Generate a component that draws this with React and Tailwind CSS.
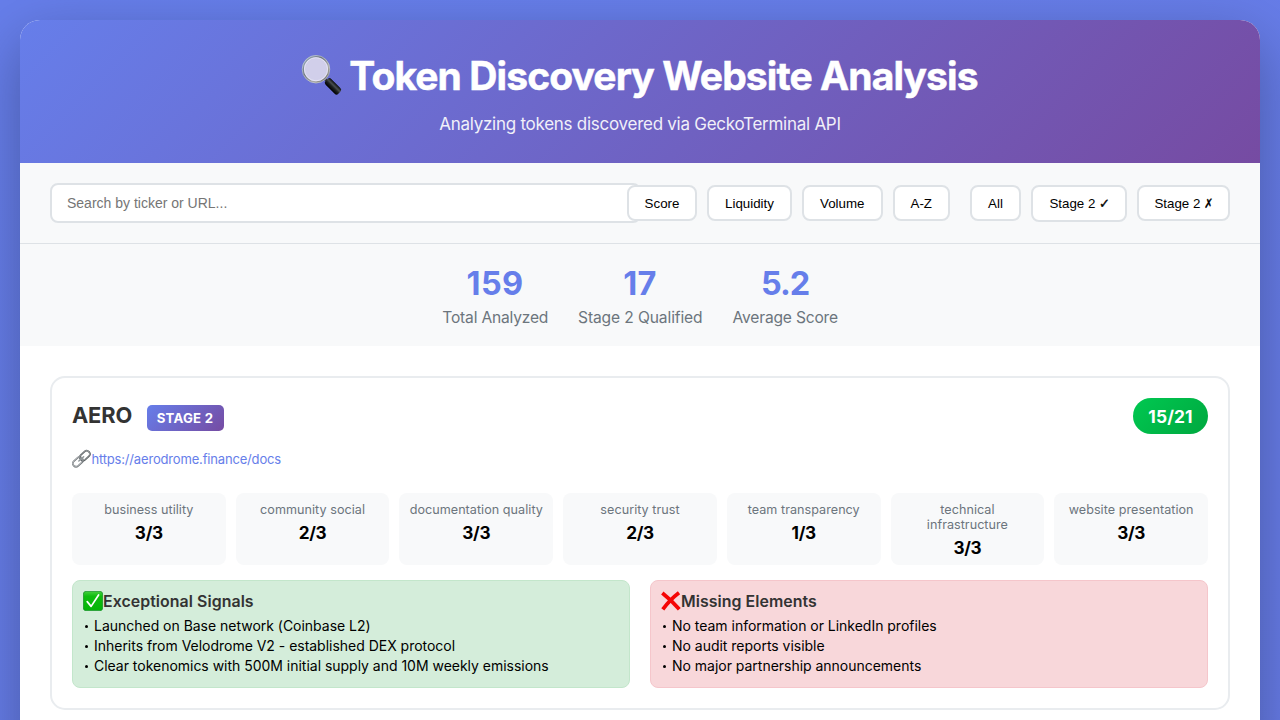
import React from 'react';

const SORTS = [
  ['Score', 'w-[70px]'],
  ['Liquidity', 'w-[85px]'],
  ['Volume', 'w-[80.5px]'],
  ['A-Z', 'w-[57.5px]'],
];

const STATS = [
  ['159', 'Total Analyzed', 'w-[105.5px]', 'tracking-[0.35px]', 'tracking-[-0.2px]'],
  ['17', 'Stage 2 Qualified', 'w-[124.5px]', 'tracking-[0.4px]', 'tracking-[-0.12px]'],
  ['5.2', 'Average Score', 'w-[105.5px]', 'tracking-[-1.1px]', 'tracking-[-0.2px]'],
];

const METRICS = [
  ['business utility', '3/3'],
  ['community social', '2/3'],
  ['documentation quality', '3/3'],
  ['security trust', '2/3'],
  ['team transparency', '1/3'],
  ['technical infrastructure', '3/3'],
  ['website presentation', '3/3'],
];

const EXCEPTIONAL = [
  'Launched on Base network (Coinbase L2)',
  'Inherits from Velodrome V2 - established DEX protocol',
  'Clear tokenomics with 500M initial supply and 10M weekly emissions',
];

const MISSING = [
  'No team information or LinkedIn profiles',
  'No audit reports visible',
  'No major partnership announcements',
];

function Magnifier() {
  return (
    <svg className="h-[42px] w-[42px] shrink-0" viewBox="0 0 42 42">
      <defs>
        <linearGradient id="rim" x1="0" y1="0" x2="1" y2="1">
          <stop offset="0" stopColor="#a9bdd0" />
          <stop offset="0.35" stopColor="#6d7682" />
          <stop offset="0.7" stopColor="#aaa9a5" />
          <stop offset="1" stopColor="#55544f" />
        </linearGradient>
        <linearGradient id="grip" x1="0" y1="0" x2="0" y2="1">
          <stop offset="0" stopColor="#0b0d0d" />
          <stop offset="0.35" stopColor="#4a4f50" />
          <stop offset="0.6" stopColor="#1c2020" />
          <stop offset="1" stopColor="#000" />
        </linearGradient>
      </defs>
      <path d="M24.500 24.500l4 4" stroke="#34363a" strokeWidth="3" />
      <rect x="0" y="-4" width="18" height="8" rx="2.6" fill="url(#grip)" transform="translate(25.600 25) rotate(45)" />
      <circle cx="15" cy="14.200" r="13" fill="#d1cfea" stroke="url(#rim)" strokeWidth="2" />
      <circle cx="15" cy="14.200" r="13.800" fill="none" stroke="#d7e1e8" strokeOpacity="0.75" strokeWidth="0.7" />
      <circle cx="15" cy="14.200" r="11.600" fill="none" stroke="#f1f1fa" strokeOpacity="0.8" strokeWidth="0.8" />
    </svg>
  );
}

function LinkGlyph() {
  return (
    <svg className="h-5 w-5 shrink-0" viewBox="0 0 20 20" fill="none">
      <g transform="rotate(-42 9.2 9.9)">
        <rect x="-0.900" y="6.7" width="11.200" height="6.4" rx="3.2" stroke="#74797c" strokeWidth="1.700" />
        <rect x="-0.900" y="6.4" width="11.200" height="6.400" rx="3.2" stroke="#d3d7d9" strokeWidth="0.6" />
        <rect x="8.500" y="6.7" width="11.200" height="6.400" rx="3.2" stroke="#54595c" strokeWidth="1.700" />
        <rect x="8.500" y="6.4" width="11.200" height="6.400" rx="3.2" stroke="#c3c8ca" strokeWidth="0.6" />
        <path d="M6 9.9h6.500" stroke="#8f9699" strokeWidth="1.500" strokeLinecap="round" />
      </g>
    </svg>
  );
}

function CheckBox() {
  return (
    <svg className="h-5 w-5 shrink-0" viewBox="0 0 20 20">
      <defs>
        <linearGradient id="tick" x1="0" y1="0" x2="0" y2="1">
          <stop offset="0" stopColor="#45cf3f" />
          <stop offset="0.25" stopColor="#0fbd10" />
          <stop offset="1" stopColor="#03b406" />
        </linearGradient>
      </defs>
      <rect x="0.4" y="0.4" width="19.2" height="19.2" rx="2.6" fill="url(#tick)" stroke="#16932a" strokeWidth="0.8" />
      <path d="M4.200 10.600l3.900 4.800L15.600 4" fill="none" stroke="#fff" strokeWidth="1.700" strokeLinecap="round" strokeLinejoin="round" />
    </svg>
  );
}

function Cross() {
  return (
    <svg className="h-5 w-5 shrink-0 overflow-visible" viewBox="0 0 20 20">
      <path d="M1.300 1.900C6.500 6 13 12 18.300 18.200M18 1.700C12 6.200 6.500 12 1.800 18.300" fill="none" stroke="#f50505" strokeWidth="3.800" />
    </svg>
  );
}

function Pill({ width, height = 'h-9', children }) {
  return (
    <button className={`${width} ${height} relative shrink-0 whitespace-nowrap rounded-lg border-2 border-[#dee2e6] bg-white px-0 pt-px pb-0 font-['Liberation_Sans',Arial,sans-serif] text-[13.333px] leading-4 text-black`}>
      {children}
    </button>
  );
}

function Signals({ title, icon, items, tone }) {
  return (
    <section className={`h-[108px] rounded-lg border px-2.5 pt-2.5 ${tone}`}>
      <h4 className="flex h-5 items-center whitespace-nowrap text-[15.9px] font-semibold leading-5 tracking-[0.06px] text-[#333]">
        {icon}
        <span className="pt-[2px]">{title}</span>
      </h4>
      <ul className="mt-[5px] text-[14px] leading-5 tracking-[-0.02px] text-black">
        {items.map((t) => (
          <li key={t} className="flex h-5 items-center whitespace-nowrap">
            <span className="mr-[6px] ml-[2px] mt-px h-[3px] w-[3px] shrink-0 rounded-full bg-black" />
            {t}
          </li>
        ))}
      </ul>
    </section>
  );
}

export default function App() {
  return (
    <div className="h-[720px] overflow-hidden bg-[linear-gradient(135deg,#667eea_0%,#764ba2_100%)] bg-[length:1280px_42000px] bg-no-repeat p-5 font-[Inter,'Liberation_Sans',sans-serif]">
      <div className="h-[2000px] overflow-hidden rounded-[20px] bg-white shadow-[0_20px_60px_rgba(0,0,0,0.3)]">
        <header className="flex h-[143px] flex-col items-center bg-[linear-gradient(135deg,#667eea_0%,#764ba2_100%)] pt-[30px] text-white">
          <h1 className="flex h-[52px] items-center whitespace-nowrap pr-px text-[39px] font-bold leading-[52px] tracking-[-0.9px] [-webkit-text-stroke:0.5px_#fff]">
            <Magnifier />
            <span className="ml-[6px]">Token Discovery Website Analysis</span>
          </h1>
          <p className="mt-[11px] whitespace-nowrap text-[17px] leading-[22px] tracking-[-0.265px] opacity-90">
            Analyzing tokens discovered via GeckoTerminal API
          </p>
        </header>

        <div className="flex h-[81px] items-center gap-5 border-b border-[#dee2e6] bg-[#f8f9fa] px-[30px]">
          <div className="min-w-0 flex-1">
            <input
              className="block h-10 w-[calc(100%+34px)] rounded-lg border-2 border-[#dee2e6] bg-white px-[15px] font-['Liberation_Sans',Arial,sans-serif] text-[14px] placeholder:text-[#757575]"
              placeholder="Search by ticker or URL..."
            />
          </div>
          <div className="flex items-center gap-2.5">
            {SORTS.map(([label, width]) => (
              <Pill key={label} width={width}>{label}</Pill>
            ))}
          </div>
          <div className="flex items-center gap-2.5">
            <Pill width="w-[51px]">All</Pill>
            <Pill width="w-[95.5px]" height="h-[37px]">
              Stage 2 <span className="inline-block w-[9px] font-['DejaVu_Sans'] text-[13px] [-webkit-text-stroke:0.4px_#000]">✓</span>
            </Pill>
            <Pill width="w-[93.5px]">
              Stage 2 <span className="inline-block w-[8px] origin-left scale-x-[0.85] font-['DejaVu_Sans'] text-[13px] [-webkit-text-stroke:0.2px_#000]">✗</span>
            </Pill>
          </div>
        </div>

        <div className="flex h-[102px] justify-center gap-[30px] bg-[#f8f9fa] pt-5">
          {STATS.map(([value, label, width, vTrack, lTrack]) => (
            <div key={label} className={`${width} flex flex-col items-center whitespace-nowrap`}>
              <div className={`h-[39px] text-[32.5px] font-bold leading-[39px] text-[#667eea] ${vTrack}`}>{value}</div>
              <div className={`mt-[5px] pl-[0.5px] text-[15.6px] leading-5 text-[#6c757d] ${lTrack}`}>{label}</div>
            </div>
          ))}
        </div>

        <main className="p-[30px]">
          <article className="h-[334px] rounded-[15px] border-2 border-[#e9ecef] bg-white p-5">
            <div className="flex h-9 items-center justify-between">
              <div className="flex items-center">
                <h2 className="relative -top-px w-[74.5px] whitespace-nowrap text-[21.8px] font-bold leading-7 tracking-[-0.15px] text-[#333]">AERO</h2>
                <span className="mt-1 flex h-[26px] w-[77px] items-center justify-center whitespace-nowrap rounded-[5px] bg-[linear-gradient(135deg,#667eea_0%,#764ba2_100%)] pt-[2px] text-[13.2px] font-bold tracking-[0.25px] text-white">
                  STAGE 2
                </span>
              </div>
              <span className="flex h-[36.5px] w-[75px] items-center justify-center rounded-full bg-[linear-gradient(135deg,#00c851_0%,#00a83f_100%)] pt-[2px] text-[17.4px] font-bold tracking-[0.1px] text-white">
                15/21
              </span>
            </div>

            <div className="mt-[15px] flex h-5 items-center">
              <LinkGlyph />
              <a className="-ml-[0.6px] whitespace-nowrap text-[13px] leading-5 tracking-[-0.17px] text-[#667eea]">https://aerodrome.finance/docs</a>
            </div>

            <div className="mt-[24px] grid h-[72px] grid-cols-7 gap-2.5">
              {METRICS.map(([name, score]) => (
                <div key={name} className="rounded-lg bg-[#f8f9fa] px-2.5 pt-[9px] text-center">
                  <div className="text-[12.6px] leading-[15px] tracking-[0.04px] text-[#6c757d]">{name}</div>
                  <div className="mt-[5px] text-[17.2px] font-bold leading-[21px] tracking-[-0.29px] text-black">{score}</div>
                </div>
              ))}
            </div>

            <div className="mt-[15px] grid grid-cols-2 gap-5">
              <Signals title="Exceptional Signals" icon={<CheckBox />} items={EXCEPTIONAL} tone="border-[#c3e6cb] bg-[#d4edda]" />
              <Signals title="Missing Elements" icon={<Cross />} items={MISSING} tone="border-[#f5c6cb] bg-[#f8d7da]" />
            </div>
          </article>
        </main>
      </div>
    </div>
  );
}
